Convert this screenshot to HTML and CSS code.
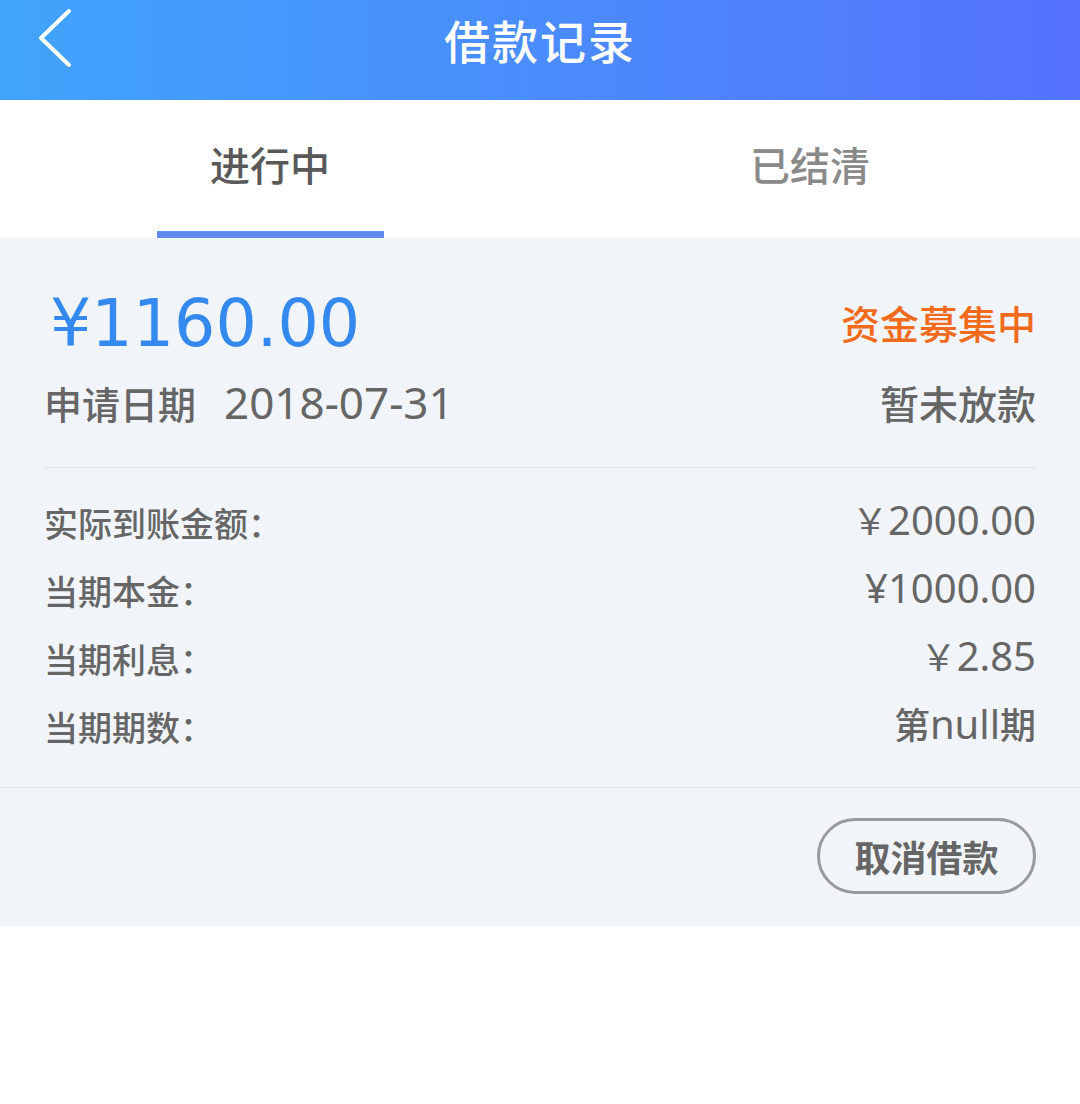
FILE: index.html
```html
<!DOCTYPE html>
<html lang="zh-CN">
<head>
<meta charset="utf-8">
<title>借款记录</title>
<link rel="stylesheet" href="styles.css">
</head>
<body>
<header class="header">
  <div class="header-bar">
    <a class="back" href="#" aria-label="返回">
      <svg width="36" height="64" viewBox="0 0 36 64"><polyline points="31,4 3,31 31,58" fill="none" stroke="#fff" stroke-width="4" stroke-linecap="round" stroke-linejoin="round"/></svg>
    </a>
    <h1 class="title">借款记录</h1>
  </div>
</header>
<nav class="tabs">
  <div class="tab active"><span class="tab-label">进行中</span><span class="tab-line"></span></div>
  <div class="tab"><span class="tab-label">已结清</span><span class="tab-line"></span></div>
</nav>
<main class="record">
  <section class="summary">
    <div class="summary-row">
      <span class="amount">¥1160.00</span>
      <span class="status">资金募集中</span>
    </div>
    <div class="summary-row date-row">
      <span class="date"><span class="date-label">申请日期</span><span class="date-value">2018-07-31</span></span>
      <span class="loan-state">暂未放款</span>
    </div>
  </section>
  <section class="details">
    <div class="detail-row"><span class="detail-label">实际到账金额：</span><span class="detail-value"><span class="yen-wide">￥</span>2000.00</span></div>
    <div class="detail-row"><span class="detail-label">当期本金：</span><span class="detail-value">¥1000.00</span></div>
    <div class="detail-row"><span class="detail-label">当期利息：</span><span class="detail-value"><span class="yen-wide">￥</span>2.85</span></div>
    <div class="detail-row"><span class="detail-label">当期期数：</span><span class="detail-value"><span class="cjk">第</span>null<span class="cjk">期</span></span></div>
  </section>
  <section class="actions">
    <button class="cancel-btn" type="button">取消借款</button>
  </section>
</main>
</body>
</html>
```

FILE: styles.css
```css
* { box-sizing: border-box; }
html, body { margin: 0; padding: 0; background: #ffffff; }
body {
  width: 1080px;
  font-family: "Noto Sans CJK SC", "Noto Sans", sans-serif;
  color: #666666;
}

.header {
  height: 100px;
  background: linear-gradient(90deg, #40a4fb 0%, #4a8cfc 50%, #5572fd 100%);
}
.header-bar {
  height: 78px;
  display: flex;
  align-items: center;
  justify-content: center;
  position: relative;
}
.back {
  position: absolute;
  left: 38px;
  top: 7px;
  display: block;
  width: 36px;
  height: 64px;
}
.back svg { display: block; }
.title {
  margin: 0;
  font-size: 46px;
  font-weight: 500;
  color: #ffffff;
  letter-spacing: 2px;
  line-height: 78px;
}

.tabs {
  display: flex;
  height: 138px;
  background: #ffffff;
}
.tab {
  flex: 1;
  display: flex;
  flex-direction: column;
  align-items: center;
  padding-top: 36px;
}
.tab-label {
  font-size: 40px;
  font-weight: 500;
  line-height: 56px;
  color: #8a8a8a;
}
.tab.active .tab-label { color: #595959; }
.tab-line {
  margin-top: auto;
  width: 227px;
  height: 7px;
  background: transparent;
}
.tab.active .tab-line { background: #6189ec; }

.record {
  background: #f1f5fa;
  padding: 0 44px;
}
.summary {
  padding-top: 46px;
  padding-bottom: 37px;
  border-bottom: 1px solid #e1e5ea;
}
.summary-row {
  display: flex;
  justify-content: space-between;
  align-items: center;
  height: 76px;
}
.amount {
  font-family: "DejaVu Sans", "Noto Sans", sans-serif;
  font-size: 65px;
  color: #3489ee;
  padding-left: 6px;
  padding-top: 2px;
}
.status {
  font-size: 39px;
  color: #f26b1d;
  font-weight: 500;
}
.date-row {
  height: 56px;
  margin-top: 14px;
}
.date-label {
  font-size: 38px;
  font-weight: 500;
  color: #666666;
  margin-right: 28px;
}
.date-value {
  font-family: "Noto Sans", sans-serif;
  font-size: 44px;
  color: #666666;
}
.loan-state {
  font-size: 39px;
  font-weight: 500;
  color: #666666;
}

.details {
  margin: 0 -44px;
  padding: 20px 44px 27px;
  border-bottom: 1px solid #e1e5ea;
}
.detail-row {
  display: flex;
  justify-content: space-between;
  align-items: center;
  height: 68px;
}
.detail-label {
  font-size: 34px;
  font-weight: 500;
  color: #666666;
}
.detail-value {
  font-family: "Noto Sans", "Noto Sans CJK SC", sans-serif;
  font-size: 40px;
  color: #666666;
  padding-bottom: 5px;
}
.yen-wide {
  font-family: "Noto Sans CJK SC", sans-serif;
  font-size: 36px;
}
.cjk {
  font-family: "Noto Sans CJK SC", sans-serif;
  font-size: 36px;
  font-weight: 500;
}

.actions {
  display: flex;
  justify-content: flex-end;
  padding: 30px 0 32px;
}
.cancel-btn {
  width: 219px;
  height: 76px;
  border: 3px solid #9a9a9a;
  border-radius: 38px;
  background: transparent;
  font-family: "Noto Sans CJK SC", sans-serif;
  font-size: 36px;
  font-weight: 700;
  color: #666666;
  padding: 0;
  cursor: pointer;
}
```
